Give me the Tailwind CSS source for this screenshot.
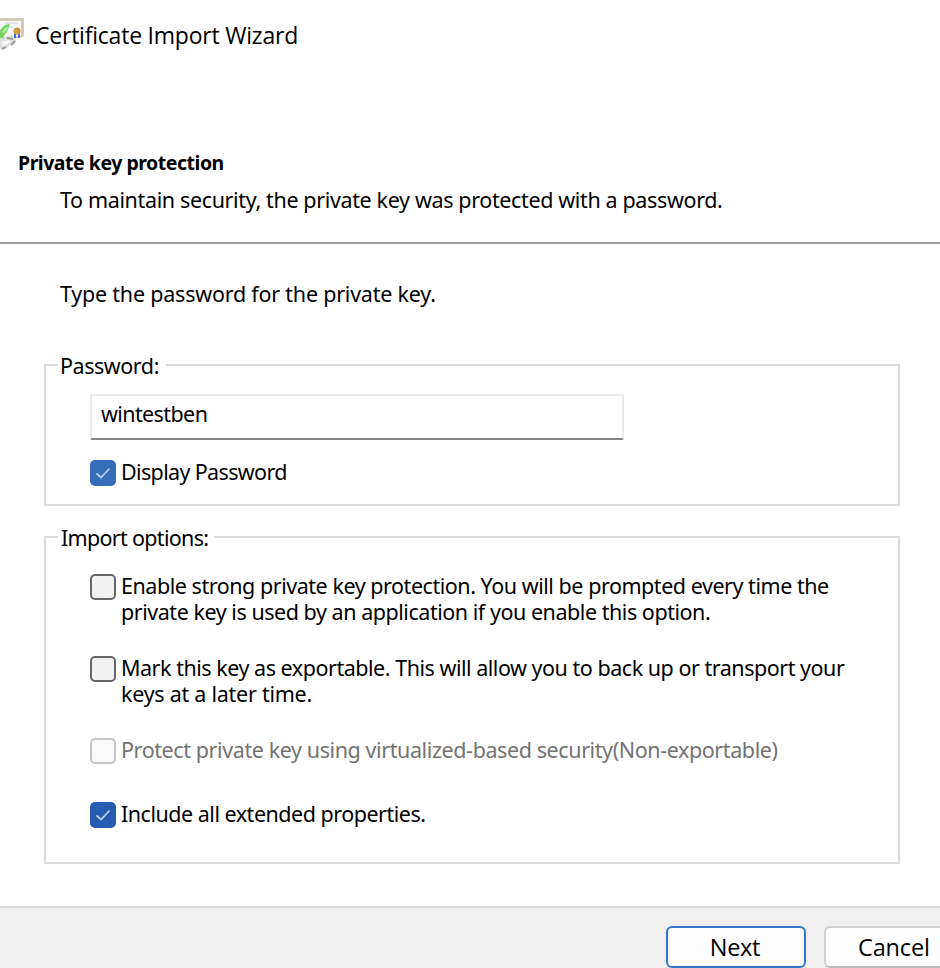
<!DOCTYPE html>
<html lang="en">
<head>
<meta charset="utf-8">
<title>Certificate Import Wizard</title>
<script src="https://cdn.jsdelivr.net/npm/@tailwindcss/browser@4"></script>
</head>
<body class="bg-white">
<div class="flex h-[968px] w-[940px] flex-col overflow-hidden bg-white font-['Noto_Sans',sans-serif] text-[21.500px] leading-[26px] whitespace-nowrap text-black">
  <header class="flex h-[142px] items-start">
    <svg class="mt-[18px] h-[34px] w-[24px] shrink-0" viewBox="0 0 24 34">
      <path d="M0 0H24V18L20 20H0Z" fill="#d3cabd"/>
      <path d="M0 3H21V17L14 19H0Z" fill="#f7f7f5"/>
      <path d="M5 5H18M8 9H13" stroke="#e2e4ea" stroke-width="2"/>
      <path d="M0 20L12 17L16 20V24L5 31H0Z" fill="#dedede"/>
      <path d="M2 31L6 29M11 27L15 23M7 20L13 21" stroke="#9f9f9f" stroke-width="2"/>
      <path d="M1 24L9 22L11 24L3 28Z" fill="#f8f8f8"/>
      <path d="M0 20V13C2 9 5 6 10 6C8 9 9 13 5 16L3 20Z" fill="#74d460"/>
      <path d="M2 14C4 11 6 9 8 8L7 12L4 15Z" fill="#b2f09a"/>
      <path d="M14 15H16V20H14ZM18 15H20V20H18Z" fill="#3b6de0"/>
      <circle cx="17" cy="13" r="3.500" fill="#d39a3a"/>
    </svg>
    <h1 class="mt-[21px] ml-[11px] font-['Open_Sans',sans-serif] text-[23px] leading-[28px] tracking-[-0.22px]">Certificate Import Wizard</h1>
  </header>
  <section class="h-[102px] border-b-2 border-[#a0a0a0]">
    <h2 class="mt-[8px] ml-[18px] text-[19.500px] font-bold tracking-[-0.48px]">Private key protection</h2>
    <p class="mt-[11px] ml-[60px] tracking-[-0.36px]">To maintain security, the private key was protected with a password.</p>
  </section>
  <main class="flex h-[662px] flex-col px-[44px] pr-[40px]">
    <p class="mt-[37px] ml-[16px] tracking-[-0.22px]">Type the password for the private key.</p>
    <section class="mt-[57px] h-[142px] border-2 border-[#dcdcdc] pl-[44px]">
      <h3 class="-mt-[13px] -ml-[32px] w-[108px] bg-white pl-[2px] tracking-[-0.45px]">Password:</h3>
      <div class="mt-[15px] flex h-[46px] w-[534px] rounded-[2px] border-2 border-[#ebebeb] border-b-[#858585] pt-[5px] pl-[9px] tracking-[-0.6px]">wintestben</div>
      <label class="mt-[20px] flex items-start gap-[5px]">
        <svg class="size-[26px]" viewBox="0 0 26 26"><rect width="26" height="26" rx="5" fill="#346db9"/><path d="M6.500 13.500L11 17.500L19.500 8.500" fill="none" stroke="#b9cfec" stroke-width="1.700"/></svg>
        <span class="-mt-[1px] tracking-[-0.65px]">Display Password</span>
      </label>
    </section>
    <section class="mt-[30px] h-[328px] border-2 border-[#dcdcdc] pl-[44px]">
      <h3 class="-mt-[13px] -ml-[32px] w-[156px] bg-white pl-[3px] tracking-[-0.69px]">Import options:</h3>
      <label class="mt-[22px] flex items-start gap-[5px]">
        <i class="mt-[1px] size-[26px] shrink-0 rounded-[5px] border-2 border-[#666] bg-[#f2f2f2]"></i>
        <p class="tracking-[-0.46px]">Enable strong private key protection. You will be prompted every time the<br>private key is used by an application if you enable this option.</p>
      </label>
      <label class="mt-[30px] flex items-start gap-[5px]">
        <i class="mt-[1px] size-[26px] shrink-0 rounded-[5px] border-2 border-[#666] bg-[#f2f2f2]"></i>
        <p class="tracking-[-0.475px]">Mark this key as exportable. This will allow you to back up or transport your<br><span class="tracking-[-0.26px]">keys at a later time.</span></p>
      </label>
      <label class="mt-[30px] flex h-[26px] items-start gap-[5px] text-[#737373]">
        <i class="mt-[1px] size-[26px] shrink-0 rounded-[5px] border-2 border-[#c4c4c4] bg-[#f9f9f9]"></i>
        <span class="tracking-[-0.405px]">Protect private key using virtualized-based security(Non-exportable)</span>
      </label>
      <label class="mt-[38px] flex h-[26px] items-start gap-[5px]">
        <svg class="mt-[1px] size-[26px] shrink-0" viewBox="0 0 26 26"><rect width="26" height="26" rx="5" fill="#255cb0"/><path d="M6.500 13.500L11 17.500L19.500 8.500" fill="none" stroke="#b9cfec" stroke-width="1.700"/></svg>
        <span class="tracking-[-0.49px]">Include all extended properties.</span>
      </label>
    </section>
  </main>
  <footer class="flex h-[62px] border-t-2 border-[#dcdcdc] bg-[#f0f0f0] pt-[18px] pl-[666px] font-['Open_Sans',sans-serif] text-[23.500px]">
    <div class="flex h-[42px] w-[140px] shrink-0 items-center justify-center rounded-[6px] border-2 border-[#3275cd] bg-[#fdfdfd] pr-[2px] tracking-[-0.3px]">Next</div>
    <div class="ml-[18px] flex h-[42px] w-[140px] shrink-0 items-center rounded-[6px] border-2 border-[#d0d0d0] border-b-[#bcbcbc] bg-[#fdfdfd] pl-[32px] tracking-[-0.15px]">Cancel</div>
  </footer>
</div>
</body>
</html>
